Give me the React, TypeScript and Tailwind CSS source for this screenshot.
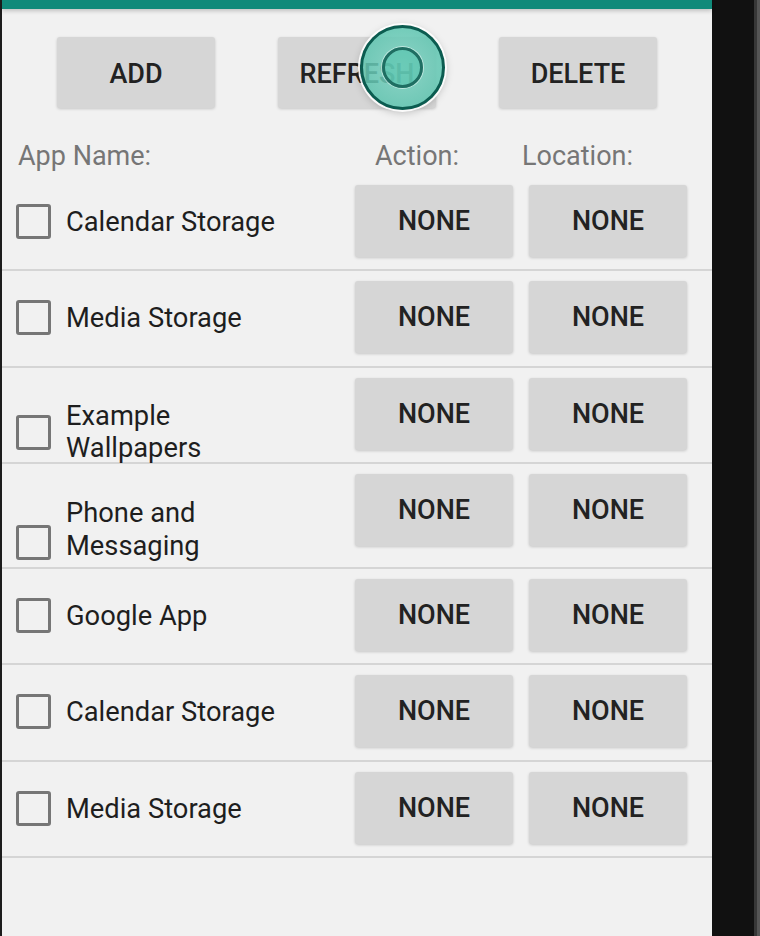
import React from "react";

type Row = { label: string[]; h: string; align: "center" | "bottom" };

const rows: Row[] = [
  { label: ["Calendar Storage"], h: "h-[96px]", align: "center" },
  { label: ["Media Storage"], h: "h-[97px]", align: "center" },
  { label: ["Example", "Wallpapers"], h: "h-[96px]", align: "center" },
  { label: ["Phone and", "Messaging"], h: "h-[105px]", align: "bottom" },
  { label: ["Google App"], h: "h-[96px]", align: "center" },
  { label: ["Calendar Storage"], h: "h-[97px]", align: "center" },
  { label: ["Media Storage"], h: "h-[96px]", align: "center" },
];

function Btn({ children, cls = "" }: { children: React.ReactNode; cls?: string }) {
  return (
    <div
      className={
        "flex w-[158px] items-center justify-center rounded-[3px] bg-[#d6d6d6] text-[27px] font-medium text-[#222222] shadow-[0_1px_3px_rgba(0,0,0,0.18)] " +
        cls
      }
    >
      {children}
    </div>
  );
}

function Checkbox() {
  return <div className="h-[35px] w-[35px] shrink-0 rounded-[3px] border-[3px] border-[#767676]" />;
}

export default function App() {
  return (
    <div
      className="flex h-[936px] w-[760px] overflow-hidden bg-[#111111]"
      style={{ fontFamily: "Roboto, 'Noto Sans', sans-serif" }}
    >
      <div className="w-[2px] bg-[#1c1c1c]" />
      <div className="relative flex w-[710px] flex-col bg-[#f1f1f1]">
        <div className="h-[9px] bg-[#108a7a] shadow-[0_2px_4px_rgba(0,0,0,0.2)]" />
        <div className="mt-[28px] flex justify-center gap-[63px]">
          <Btn cls="h-[71px] pt-[3px]">ADD</Btn>
          <Btn cls="h-[71px] pt-[3px]">REFRESH</Btn>
          <Btn cls="h-[71px] pt-[3px]">DELETE</Btn>
        </div>
        <div className="flex h-[67px] pt-[32px] text-[27px] leading-[32px] text-[#767676]">
          <span className="ml-[16px] w-[357px]">App Name:</span>
          <span className="w-[147px]">Action:</span>
          <span>Location:</span>
        </div>
        {rows.map((r, i) => (
          <div
            key={i}
            className={"flex shrink-0 border-b-2 border-[#d5d5d5] " + r.h}
          >
            {r.align === "center" ? (
              <div
                className={
                  "flex w-[353px] items-center gap-[15px] self-start pl-[14px] " +
                  (r.label.length > 1 ? "pt-[32px]" : "pt-[29px]")
                }
              >
                <Checkbox />
                <div className="text-[27.3px] leading-[32px] text-[#1e1e1e]">
                  {r.label.map((l, j) => (
                    <div key={j}>{l}</div>
                  ))}
                </div>
              </div>
            ) : (
              <div className="flex w-[353px] items-end gap-[15px] self-start pl-[14px] pt-[33px]">
                <div className="mb-[3px]">
                  <Checkbox />
                </div>
                <div className="text-[27.3px] leading-[33px] text-[#1e1e1e]">
                  {r.label.map((l, j) => (
                    <div key={j}>{l}</div>
                  ))}
                </div>
              </div>
            )}
            <div className="flex gap-[16px] pt-[10px]">
              <Btn cls="h-[72px] pt-[1px]">NONE</Btn>
              <Btn cls="h-[72px] pt-[1px]">NONE</Btn>
            </div>
          </div>
        ))}
        <div className="pointer-events-none absolute left-[358px] top-[25px] flex h-[85px] w-[85px] items-center justify-center rounded-full border-[3px] border-[#0b5c50] bg-[radial-gradient(circle,rgba(125,212,195,0.82)_0%,rgba(84,192,170,0.88)_100%)] shadow-[0_0_0_2px_rgba(255,255,255,0.9),0_2px_8px_rgba(0,0,0,0.25)]">
          <div className="h-[41px] w-[41px] rounded-full border-[3px] border-[#1f6e62] bg-[rgba(80,195,172,0.55)] shadow-[0_0_0_1px_rgba(255,255,255,0.5)]" />
        </div>
      </div>
      <div className="w-[42px] bg-[#111111]" />
      <div className="w-[3px] bg-[#373737]" />
      <div className="w-[3px] bg-[#555555]" />
    </div>
  );
}
